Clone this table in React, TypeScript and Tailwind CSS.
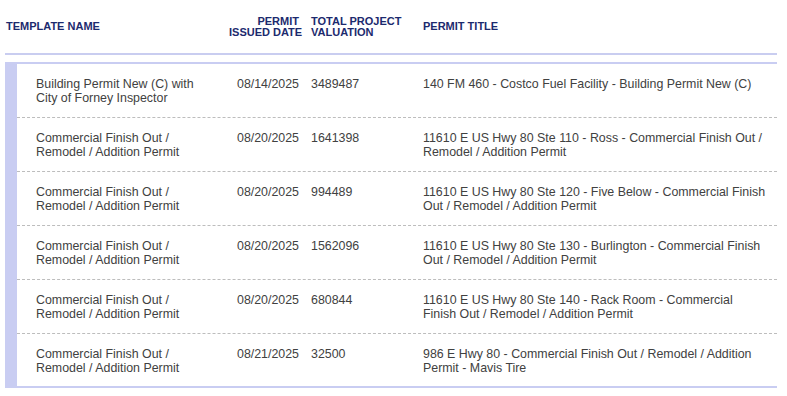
const rows = [
  {
    name: 'Building Permit New (C) with City of Forney Inspector',
    date: '08/14/2025',
    value: '3489487',
    title: '140 FM 460 - Costco Fuel Facility - Building Permit New (C)',
  },
  {
    name: 'Commercial Finish Out / Remodel / Addition Permit',
    date: '08/20/2025',
    value: '1641398',
    title: '11610 E US Hwy 80 Ste 110 - Ross - Commercial Finish Out / Remodel / Addition Permit',
  },
  {
    name: 'Commercial Finish Out / Remodel / Addition Permit',
    date: '08/20/2025',
    value: '994489',
    title: '11610 E US Hwy 80 Ste 120 - Five Below - Commercial Finish Out / Remodel / Addition Permit',
  },
  {
    name: 'Commercial Finish Out / Remodel / Addition Permit',
    date: '08/20/2025',
    value: '1562096',
    title: '11610 E US Hwy 80 Ste 130 - Burlington - Commercial Finish Out / Remodel / Addition Permit',
  },
  {
    name: 'Commercial Finish Out / Remodel / Addition Permit',
    date: '08/20/2025',
    value: '680844',
    title: '11610 E US Hwy 80 Ste 140 - Rack Room - Commercial Finish Out / Remodel / Addition Permit',
  },
  {
    name: 'Commercial Finish Out / Remodel / Addition Permit',
    date: '08/21/2025',
    value: '32500',
    title: '986 E Hwy 80 - Commercial Finish Out / Remodel / Addition Permit - Mavis Tire',
  },
];

export default function App() {
  return (
    <div className="w-[787px] h-[396px] bg-white pl-[5px] font-['Liberation_Sans',Arial,sans-serif]">
      <div className="w-[772px]">
        {/* header */}
        <div className="flex items-center h-[55px] border-b-2 border-[#c9cdf0] text-[11px] leading-[11px] font-bold text-[#1c2a6e]">
          <div className="w-[224px] pl-[1px]">TEMPLATE NAME</div>
          <div className="w-[70px] text-right whitespace-nowrap">
            PERMIT
            <br />
            ISSUED DATE
          </div>
          <div className="w-[124px] pl-[12px] whitespace-nowrap">
            TOTAL PROJECT
            <br />
            VALUATION
          </div>
          <div className="flex-1">PERMIT TITLE</div>
        </div>

        {/* body */}
        <div className="mt-[7px] border-t-2 border-b-2 border-l-[12px] border-[#c9cdf2] text-[12.4px] leading-[14px] text-[#414141]">
          {rows.map((r, i) => (
            <div
              key={i}
              className={
                'flex pt-[13px] ' +
                (i < rows.length - 1 ? 'pb-[12px] border-b border-dashed border-[#bdbdbd]' : 'pb-[11px]')
              }
            >
              <div className="w-[219px] pl-[19px] pr-[30px]">{r.name}</div>
              <div className="w-[63px] text-right whitespace-nowrap">{r.date}</div>
              <div className="w-[124px] pl-[12px]">{r.value}</div>
              <div className="w-[343px]">{r.title}</div>
            </div>
          ))}
        </div>
      </div>
    </div>
  );
}
